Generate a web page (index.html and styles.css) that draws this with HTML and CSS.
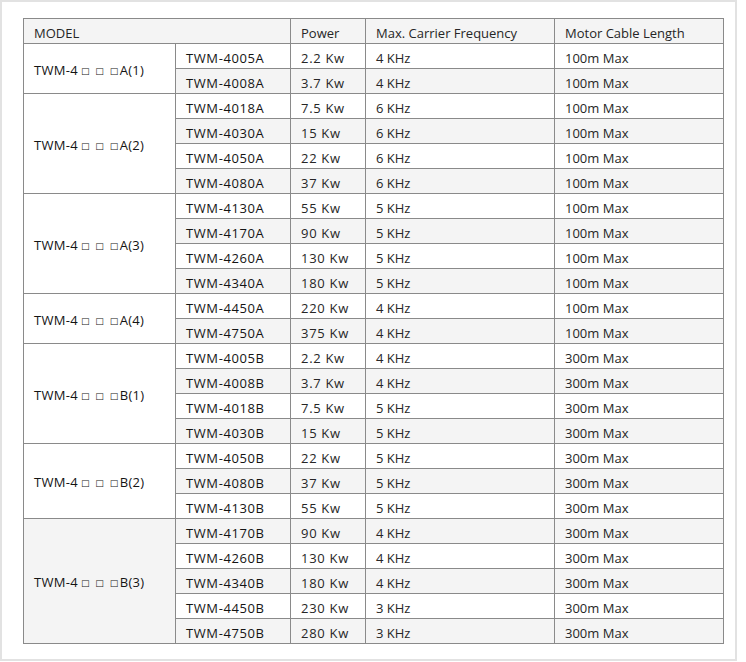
FILE: index.html
```html
<!DOCTYPE html>
<html>
<head>
<meta charset="utf-8">
<link rel="stylesheet" href="styles.css">
</head>
<body>
<div class="frame">
<table class="spec">
<colgroup>
<col class="c1"><col class="c2"><col class="c3"><col class="c4"><col class="c5">
</colgroup>
<tr><td colspan="2">MODEL</td><td>Power</td><td>Max. Carrier Frequency</td><td>Motor Cable Length</td></tr>
<tr><td rowspan="2" class="grp">TWM-4<span class="sq">□ □ □</span>A(1)</td><td class="mdl">TWM-4005A</td><td class="pw">2.2 Kw</td><td>4 KHz</td><td>100m Max</td></tr>
<tr><td class="mdl">TWM-4008A</td><td class="pw">3.7 Kw</td><td>4 KHz</td><td>100m Max</td></tr>
<tr><td rowspan="4" class="grp">TWM-4<span class="sq">□ □ □</span>A(2)</td><td class="mdl">TWM-4018A</td><td class="pw">7.5 Kw</td><td>6 KHz</td><td>100m Max</td></tr>
<tr><td class="mdl">TWM-4030A</td><td class="pw">15 Kw</td><td>6 KHz</td><td>100m Max</td></tr>
<tr><td class="mdl">TWM-4050A</td><td class="pw">22 Kw</td><td>6 KHz</td><td>100m Max</td></tr>
<tr><td class="mdl">TWM-4080A</td><td class="pw">37 Kw</td><td>6 KHz</td><td>100m Max</td></tr>
<tr><td rowspan="4" class="grp">TWM-4<span class="sq">□ □ □</span>A(3)</td><td class="mdl">TWM-4130A</td><td class="pw">55 Kw</td><td>5 KHz</td><td>100m Max</td></tr>
<tr><td class="mdl">TWM-4170A</td><td class="pw">90 Kw</td><td>5 KHz</td><td>100m Max</td></tr>
<tr><td class="mdl">TWM-4260A</td><td class="pw">130 Kw</td><td>5 KHz</td><td>100m Max</td></tr>
<tr><td class="mdl">TWM-4340A</td><td class="pw">180 Kw</td><td>5 KHz</td><td>100m Max</td></tr>
<tr><td rowspan="2" class="grp">TWM-4<span class="sq">□ □ □</span>A(4)</td><td class="mdl">TWM-4450A</td><td class="pw">220 Kw</td><td>4 KHz</td><td>100m Max</td></tr>
<tr><td class="mdl">TWM-4750A</td><td class="pw">375 Kw</td><td>4 KHz</td><td>100m Max</td></tr>
<tr><td rowspan="4" class="grp">TWM-4<span class="sq">□ □ □</span>B(1)</td><td class="mdl">TWM-4005B</td><td class="pw">2.2 Kw</td><td>4 KHz</td><td>300m Max</td></tr>
<tr><td class="mdl">TWM-4008B</td><td class="pw">3.7 Kw</td><td>4 KHz</td><td>300m Max</td></tr>
<tr><td class="mdl">TWM-4018B</td><td class="pw">7.5 Kw</td><td>5 KHz</td><td>300m Max</td></tr>
<tr><td class="mdl">TWM-4030B</td><td class="pw">15 Kw</td><td>5 KHz</td><td>300m Max</td></tr>
<tr><td rowspan="3" class="grp">TWM-4<span class="sq">□ □ □</span>B(2)</td><td class="mdl">TWM-4050B</td><td class="pw">22 Kw</td><td>5 KHz</td><td>300m Max</td></tr>
<tr><td class="mdl">TWM-4080B</td><td class="pw">37 Kw</td><td>5 KHz</td><td>300m Max</td></tr>
<tr><td class="mdl">TWM-4130B</td><td class="pw">55 Kw</td><td>5 KHz</td><td>300m Max</td></tr>
<tr><td rowspan="5" class="grp">TWM-4<span class="sq">□ □ □</span>B(3)</td><td class="mdl">TWM-4170B</td><td class="pw">90 Kw</td><td>4 KHz</td><td>300m Max</td></tr>
<tr><td class="mdl">TWM-4260B</td><td class="pw">130 Kw</td><td>4 KHz</td><td>300m Max</td></tr>
<tr><td class="mdl">TWM-4340B</td><td class="pw">180 Kw</td><td>4 KHz</td><td>300m Max</td></tr>
<tr><td class="mdl">TWM-4450B</td><td class="pw">230 Kw</td><td>3 KHz</td><td>300m Max</td></tr>
<tr><td class="mdl">TWM-4750B</td><td class="pw">280 Kw</td><td>3 KHz</td><td>300m Max</td></tr>
</table>
</div>
</body>
</html>
```
FILE: styles.css
```css
html, body {
  margin: 0;
  padding: 0;
  background: #ffffff;
}
.frame {
  box-sizing: border-box;
  width: 737px;
  height: 661px;
  border: 2px solid #e2e2e2;
  padding: 16px 0 0 21px;
  background: #ffffff;
}
.spec {
  border-collapse: collapse;
  table-layout: fixed;
  width: 700px;
  font-family: "Open Sans", "Noto Sans", sans-serif;
  font-size: 13px;
  color: #262626;
}
.c1 { width: 152px; }
.c2 { width: 115px; }
.c3 { width: 75px; }
.c4 { width: 189px; }
.c5 { width: 169px; }
.spec td {
  box-sizing: border-box;
  border: 1px solid #8a8a8a;
  height: 25px;
  padding: 3px 10px 0;
  white-space: nowrap;
  vertical-align: middle;
  line-height: 16px;
}
.spec tr:nth-child(odd) td {
  background: #f4f4f4;
}
.spec tr:nth-child(even) td {
  background: #ffffff;
}
.grp, .mdl {
  color: #141414;
}
.mdl {
  letter-spacing: 0.6px;
}
.pw {
  letter-spacing: 0.7px;
}
.grp {
  letter-spacing: 0.3px;
}
.sq {
  font-family: "DejaVu Sans", sans-serif;
  font-size: 9px;
  letter-spacing: 1.5px;
  margin: 0 0 0 3px;
  vertical-align: 1px;
}
```
